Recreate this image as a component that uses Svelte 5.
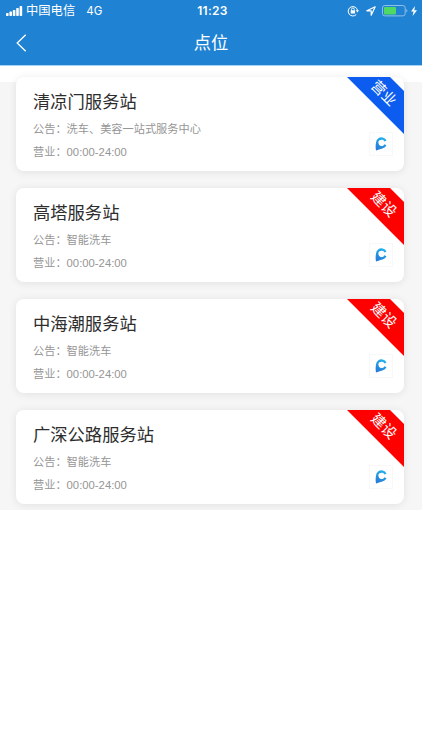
<script lang="ts">
  interface Station {
    name: string;
    notice: string;
    hours: string;
    status: string;
    open: boolean;
  }

  const stations: Station[] = [
    { name: '清凉门服务站', notice: '洗车、美容一站式服务中心', hours: '00:00-24:00', status: '营业', open: true },
    { name: '高塔服务站', notice: '智能洗车', hours: '00:00-24:00', status: '建设', open: false },
    { name: '中海潮服务站', notice: '智能洗车', hours: '00:00-24:00', status: '建设', open: false },
    { name: '广深公路服务站', notice: '智能洗车', hours: '00:00-24:00', status: '建设', open: false }
  ];
</script>

<header class="header">
  <div class="status-bar">
    <div class="status-left">
      <svg class="signal" viewBox="0 0 17 10" width="17" height="10" fill="#fff">
        <rect x="0" y="7" width="2.6" height="3" rx="0.7" />
        <rect x="3.4" y="5.6" width="2.6" height="4.4" rx="0.7" />
        <rect x="6.8" y="4" width="2.6" height="6" rx="0.7" />
        <rect x="10.2" y="2" width="2.6" height="8" rx="0.7" />
        <rect x="13.6" y="0" width="2.6" height="10" rx="0.7" />
      </svg>
      <span class="carrier">中国电信</span>
      <span class="network">4G</span>
    </div>
    <span class="clock">11:23</span>
    <div class="status-right">
      <!-- 屏幕旋转锁定 -->
      <svg viewBox="0 0 12 12" width="12" height="12" fill="none" stroke="#fff">
        <path d="M9.3 9.5A4.7 4.7 0 1 1 10.5 5.3" stroke-width="1" />
        <path d="M8.7 5.2h3.3l-1.6 2.4z" fill="#fff" stroke="none" />
        <path d="M4.5 5.5V4.4a1.4 1.4 0 0 1 2.8 0v1.1" stroke-width="0.9" />
        <rect x="3.7" y="5.2" width="4.4" height="3.4" rx="0.4" fill="#fff" stroke="none" />
      </svg>
      <!-- 定位 -->
      <svg class="locate" viewBox="0 0 10 10" width="10" height="10" fill="none" stroke="#fff" stroke-width="1.2" stroke-linejoin="round">
        <path d="M9.2 0.8L0.8 4.8H5.2V9.2z" />
      </svg>
      <svg class="battery" viewBox="0 0 26 12" width="26" height="12">
        <rect x="0.5" y="0.5" width="22.7" height="10.4" rx="2.4" fill="none" stroke="#8fc0e8" />
        <rect x="2" y="2" width="12" height="7.4" rx="1" fill="#4fd964" />
        <path d="M24.3 4v3.6a2 2 0 0 0 0-3.6z" fill="#8fc0e8" />
      </svg>
      <svg class="bolt" viewBox="0 0 6 10" width="6" height="10" fill="#fff">
        <path d="M4 0L0 5.5h2.5L1.6 10 6 4.2H3.3z" />
      </svg>
    </div>
  </div>
  <div class="nav-bar">
    <button type="button" class="back" aria-label="返回">
      <svg viewBox="0 0 11 18" width="11" height="18" fill="none" stroke="#fff" stroke-width="1.3">
        <path d="M9.7 0.7L1.2 9l8.5 8.3" />
      </svg>
    </button>
    <h1 class="title">点位</h1>
  </div>
</header>

<main class="list">
  {#each stations as station}
    <article class="card">
      <h2 class="name">{station.name}</h2>
      <p class="row">公告：{station.notice}</p>
      <p class="row">营业：<span class="hours">{station.hours}</span></p>
      <div class="ribbon" class:open={station.open}>
        <span>{station.status}</span>
      </div>
      <div class="pin">
        <svg viewBox="0 0 12 14" width="12" height="14">
          <defs>
            <linearGradient id="pin-fill" gradientUnits="userSpaceOnUse" x1="9" y1="1" x2="2" y2="13">
              <stop offset="0" stop-color="#22b2ee" />
              <stop offset="1" stop-color="#2878d6" />
            </linearGradient>
          </defs>
          <path
            d="M10.5 4A4.4 4.4 0 1 0 10.5 7.8"
            fill="none"
            stroke="url(#pin-fill)"
            stroke-width="2.3"
          />
          <path d="M1 5.8C0.5 8.2 0.5 10.9 1 13.4C4.2 12.4 7.2 11.6 9 10.4L6.5 9.3C4.6 9 3.4 7.8 3.2 5.8z" fill="url(#pin-fill)" />
        </svg>
      </div>
    </article>
  {/each}
</main>

<style>
  :global(body) {
    background: #fff;
    font-family: 'Liberation Sans', 'Noto Sans CJK SC', sans-serif;
  }

  .header {
    height: 66px;
    border-bottom: 1px solid #a5d1f2;
    box-sizing: border-box;
    background: #1f82d2;
    color: #fff;
  }

  .status-bar {
    display: grid;
    grid-template-columns: 1fr auto 1fr;
    align-items: center;
    height: 21px;
    padding: 0 5px 0 6px;
  }

  .status-left,
  .status-right {
    display: flex;
    align-items: center;
  }

  .status-right {
    justify-content: flex-end;
  }

  .carrier {
    margin-left: 3px;
    padding-top: 1px;
    font-size: 12.3px;
    line-height: 20px;
  }

  .network {
    margin-left: 11px;
    font-family: Inter, sans-serif;
    font-size: 11.5px;
  }

  .clock {
    padding-left: 2px;
    font-family: Inter, sans-serif;
    font-size: 12px;
    font-weight: 600;
    letter-spacing: 0.3px;
  }

  .locate {
    margin-left: 7px;
  }

  .battery {
    margin-left: 6px;
  }

  .bolt {
    margin-left: 3px;
  }

  .nav-bar {
    display: grid;
    grid-template-columns: 60px 1fr 60px;
    align-items: center;
    height: 44px;
  }

  .back {
    display: flex;
    padding: 0 0 0 16px;
    border: none;
    background: transparent;
  }

  .title {
    margin: 0;
    font-size: 17.3px;
    font-weight: 400;
    line-height: 24px;
    text-align: center;
  }

  .list {
    display: flex;
    flex-direction: column;
    gap: 17px;
    margin-top: 16px;
    padding: 0 18px 6px 16px;
    background: #f6f6f6;
  }

  .card {
    position: relative;
    box-sizing: border-box;
    height: 94px;
    padding: 13px 17px 0;
    border-radius: 8px;
    background: #fff;
    box-shadow: 0 1px 8px rgba(0, 0, 0, 0.09);
    overflow: hidden;
  }

  .card:first-child {
    margin-top: -5px;
  }

  .name {
    margin: 0 0 3px;
    color: #2d2d2d;
    font-size: 17.3px;
    font-weight: 400;
    line-height: 25px;
  }

  .row {
    margin: 0;
    color: #969696;
    font-size: 11.2px;
    line-height: 23px;
  }

  .hours {
    font-size: 11.3px;
  }

  /* 右上角斜条状态 */
  .ribbon {
    position: absolute;
    top: 0;
    right: 0;
    width: 57px;
    height: 57px;
    color: #fff;
  }

  .ribbon::before {
    content: '';
    position: absolute;
    inset: 0;
    background: #f00;
    clip-path: polygon(0 0, 43px 0, 100% 14px, 100% 100%);
  }

  .ribbon.open::before {
    background: #0c5cf0;
  }

  .ribbon span {
    position: absolute;
    top: 8.5px;
    left: 22px;
    width: 29px;
    font-size: 14.5px;
    line-height: 15px;
    text-align: center;
    white-space: nowrap;
    transform: rotate(45deg);
  }

  .pin {
    position: absolute;
    right: 12px;
    bottom: 16px;
    display: flex;
    align-items: center;
    justify-content: center;
    width: 22px;
    height: 22px;
    box-shadow: 0 0 0 1px #f8f8f8;
  }
</style>
